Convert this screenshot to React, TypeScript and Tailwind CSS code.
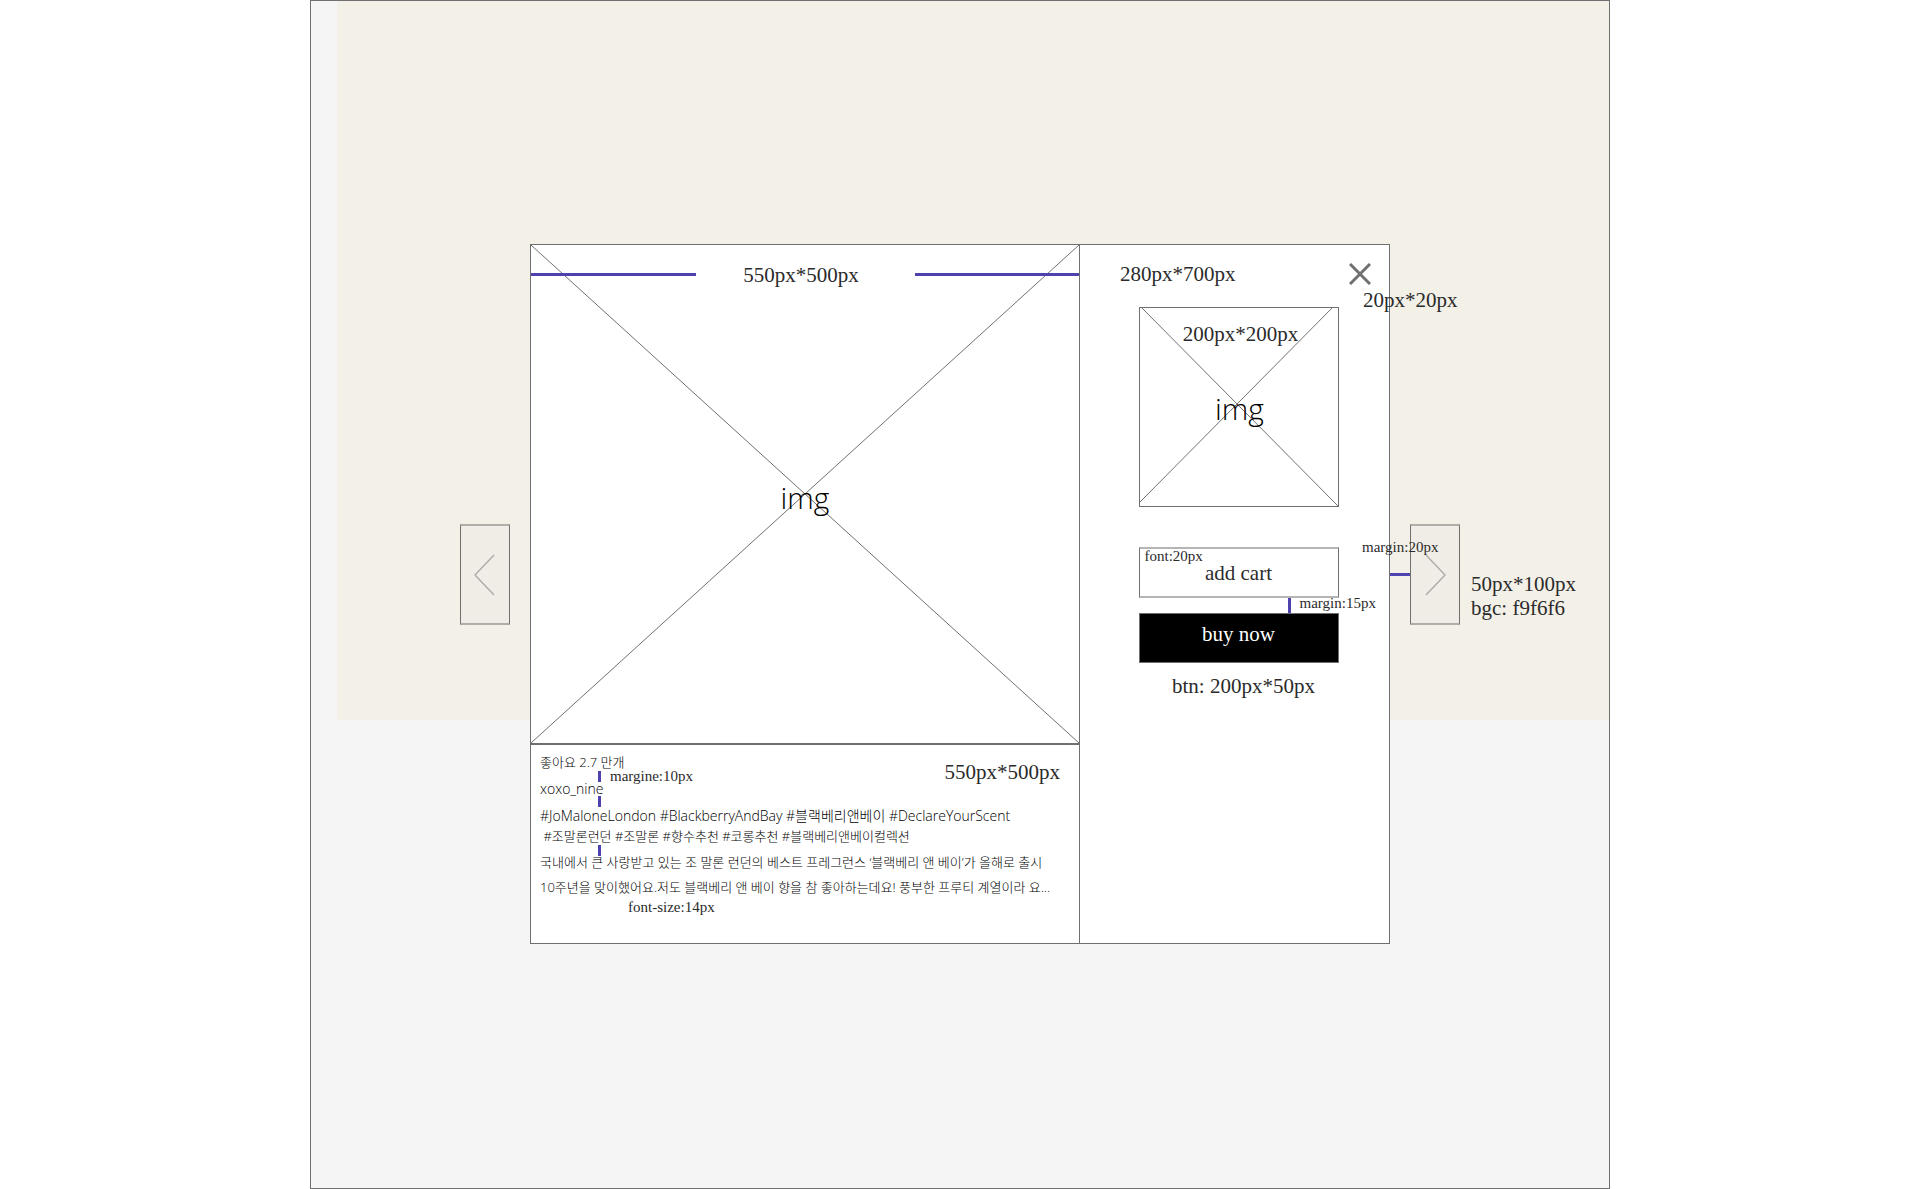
import React from "react";

const SERIF = "font-['Liberation_Serif','Noto_Sans_CJK_KR',serif] text-[#2b2b2b]";
const SANS = "font-['Open_Sans','Noto_Sans_CJK_KR',sans-serif] font-light";

function Note({ small, className = "", children }: { small?: boolean; className?: string; children: React.ReactNode }) {
  return (
    <span className={`${SERIF} ${small ? "text-[15px] leading-5" : "text-[21px] leading-6"} whitespace-nowrap ${className}`}>
      {children}
    </span>
  );
}

function Guide({ className }: { className: string }) {
  return <span aria-hidden="true" className={`absolute bg-[#4e42ae] ${className}`} />;
}

function Arrow({ label, points, children }: { label: string; points: string; children?: React.ReactNode }) {
  return (
    <div className="relative mt-[280px] shrink-0">
      <button
        type="button"
        aria-label={label}
        className="flex h-[101px] w-[50px] items-center justify-center border-x border-y-2 border-x-[#707070] border-y-[#b0aeaa] bg-[#f0ede6]"
      >
        <svg width="22" height="42" viewBox="0 0 22 42" fill="none" stroke="#aeaca8" strokeWidth="1.4">
          <polyline points={points} />
        </svg>
      </button>
      {children}
    </div>
  );
}

function Placeholder({ lines, children }: { lines: number[][]; children: React.ReactNode }) {
  return (
    <>
      <svg
        aria-hidden="true"
        className="absolute inset-0 h-full w-full"
        viewBox="0 0 100 100"
        preserveAspectRatio="none"
        stroke="#707070"
      >
        {lines.map(([x1, y1, x2, y2], i) => (
          <line key={i} x1={x1} y1={y1} x2={x2} y2={y2} vectorEffect="non-scaling-stroke" />
        ))}
      </svg>
      {children}
    </>
  );
}

export default function App() {
  return (
    <div className="min-h-screen bg-white">
      <main className="mx-auto grid min-h-screen w-full max-w-[1300px] grid-cols-1 border border-[#707070] bg-[#f5f5f5]">
        <div className="col-start-1 row-start-1 ml-[26px] h-[719px] bg-[#f3f0e8]" />

        <div className="relative col-start-1 row-start-1 flex items-start justify-center gap-5 pt-[243px]">
          <Arrow label="Previous" points="20,1 1,21 20,41" />

          <section role="dialog" aria-label="Product" className="relative flex min-h-[700px] w-[860px] border border-[#707070] bg-white">
            <div className="flex w-[549px] flex-col border-r border-[#707070]">
              <div className="relative flex h-[500px] flex-col items-center border-b-2 border-[#707070]">
                <Placeholder lines={[[0, 0, 100, 100], [100, 0, 0, 100]]}>
                  <Guide className="left-0 top-[28px] h-[3px] w-[165px]" />
                  <Guide className="right-0 top-[28px] h-[3px] w-[164px]" />
                  <Note className="relative -ml-2 mt-[18px]">550px*500px</Note>
                  <span className={`${SANS} relative mt-[191px] text-[30px] leading-10 text-black`}>img</span>
                </Placeholder>
              </div>

              <div className={`${SANS} relative px-[9px] pt-[7px] text-[13px] leading-5 text-black`}>
                <p>좋아요 2.7 만개</p>
                <p className="mt-[7px] text-[14px] leading-5">xoxo_nine</p>
                <p className="mt-[7px] whitespace-nowrap text-[14px] leading-5">
                  #JoMaloneLondon #BlackberryAndBay #블랙베리앤베이 #DeclareYourScent
                </p>
                <p className="whitespace-pre"> #조말론런던 #조말론 #향수추천 #코롱추천 #블랙베리앤베이컬렉션</p>
                <p className="mt-[6px] whitespace-nowrap">
                  국내에서 큰 사랑받고 있는 조 말론 런던의 베스트 프레그런스 ‘블랙베리 앤 베이’가 올해로 출시
                </p>
                <p className="mt-[5px] whitespace-nowrap">
                  10주년을 맞이했어요.저도 블랙베리 앤 베이 향을 참 좋아하는데요! 풍부한 프루티 계열이라 요...
                </p>
                <Note small className="block pl-[88px]">font-size:14px</Note>
                <Note small className="absolute left-[79px] top-[21px]">margine:10px</Note>
                <Note className="absolute right-[19px] top-[15px]">550px*500px</Note>
                <Guide className="left-[67px] top-[26px] h-[11px] w-[3px]" />
                <Guide className="left-[67px] top-[51px] h-[11px] w-[3px]" />
                <Guide className="left-[67px] top-[100px] h-[11px] w-[3px]" />
              </div>
            </div>

            <div className="relative flex-1">
              <div className="flex w-full items-center justify-between pl-10 pr-[17px] pt-[17px]">
                <Note>280px*700px</Note>
                <button type="button" aria-label="Close" className="flex h-6 w-6 items-center justify-center">
                  <svg width="22" height="22" viewBox="0 0 22 22" stroke="#707070" strokeWidth="3">
                    <path d="M1 1 21 21M21 1 1 21" />
                  </svg>
                </button>
              </div>
              <Note className="absolute left-[283px] top-[43px]">20px*20px</Note>

              <div className="flex flex-col items-center pl-2">
                <div className="relative mt-[21px] flex h-[200px] w-[200px] flex-col items-center border border-[#707070]">
                  <Placeholder lines={[[1, 0, 100, 100], [97, 0, 0, 98]]}>
                    <Note className="relative ml-1 mt-[14px]">200px*200px</Note>
                    <span className={`${SANS} relative mt-[43px] ml-[2px] text-[30px] leading-10 text-black`}>img</span>
                  </Placeholder>
                </div>

                <div className="relative mt-[40px]">
                  <button
                    type="button"
                    className={`${SERIF} block h-[51px] w-[200px] border-x border-y-2 border-x-[#707070] border-y-[#b5b5b5] text-[21px] leading-6`}
                  >
                    add cart
                  </button>
                  <Note small className="absolute left-[6px] top-[-1px]">font:20px</Note>
                  <Guide className="left-[149px] top-[51px] h-[15px] w-[3px]" />
                  <Note small className="absolute left-[161px] top-[46px]">margin:15px</Note>
                </div>
                <button
                  type="button"
                  className="mt-[15px] h-[50px] w-[200px] border border-[#707070] bg-black pb-2 font-['Liberation_Serif',serif] text-[21px] leading-6 text-white"
                >
                  buy now
                </button>
                <Note className="ml-[10px] mt-[11px]">btn: 200px*50px</Note>
              </div>
            </div>
          </section>

          <Arrow label="Next" points="2,1 21,21 2,41">
            <Guide className="-left-5 top-[49px] h-[3px] w-5" />
            <Note small className="absolute -left-[48px] top-[13px]">margin:20px</Note>
            <Note className="absolute left-[61px] top-[48px]">
              50px*100px
              <br />
              bgc: f9f6f6
            </Note>
          </Arrow>
        </div>
      </main>
    </div>
  );
}
